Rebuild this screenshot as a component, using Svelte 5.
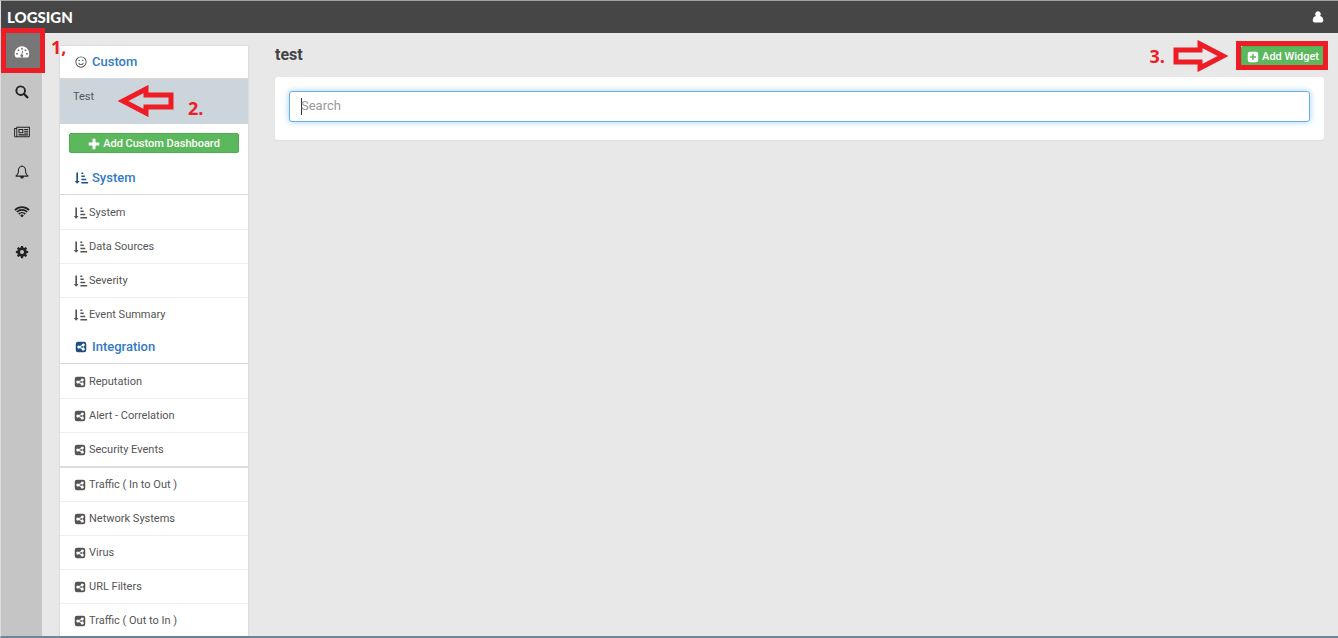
<script lang="ts">
  // 16x16 icon paths, filled with the current colour
  const icons = {
    gauge: 'M8 1.500a8.500 8.500 0 0 0-8.500 8.500c0 1.500.5 2.900 1.300 4.100.1.200.3.300.5.300h13.400c.2 0 .4-.1.5-.3A8.500 8.500 0 0 0 8 1.500zM2.300 11.100a1.100 1.100 0 1 1 0-2.200 1.100 1.100 0 0 1 0 2.200zM4 7.100a1.100 1.100 0 1 1 0-2.200 1.100 1.100 0 0 1 0 2.200zM8 3.200a1.100 1.100 0 1 1 0 2.200 1.100 1.100 0 0 1 0-2.200zM9.200 13.200a1.700 1.700 0 1 1-1.900-2.600l.9-4 1 .2-.9 4a1.700 1.700 0 0 1 .9 2.400zM12 7.100a1.100 1.100 0 1 1 0-2.200 1.100 1.100 0 0 1 0 2.200zM13.700 11.100a1.100 1.100 0 1 1 0-2.200 1.100 1.100 0 0 1 0 2.200z',
    search: 'M6.500.5a6 6 0 1 0 3.300 11l3.500 3.500a1.200 1.200 0 0 0 1.800-1.800l-3.500-3.500A6 6 0 0 0 6.500.5zm0 2.200a3.800 3.800 0 1 1 0 7.600 3.800 3.800 0 0 1 0-7.600z',
    news: 'M1.500 2H17v10.500c0 .8-.7 1.500-1.500 1.500H.5C-.4 14-1 13.300-1 12.500V3.500h2.500zM1.500 4.600H.1v7.900c0 .7 1.400.7 1.400 0zM2.600 3.100v9.400l-.1.400h13c.2 0 .4-.2.400-.4V3.100zM4 4.500h5.500v5H4zM5.200 5.700v2.600h3.100V5.700zM10.500 4.500H15v1.200h-4.500zM10.500 6.500H15v1.200h-4.500zM10.500 8.500H15v1.200h-4.500zM4 10.700H15v1.200H4z',
    bell: 'M7.200 1.100a.8.8 0 1 1 1.600 0C11.200 1.500 12.600 3.500 12.600 5.700c0 3.600 1 5.300 2.900 6.500 0 .6-.4 1.100-1 1.100h-4.400a2.100 2.100 0 0 1-4.200 0H1.500c-.6 0-1-.5-1-1.100C2.400 11 3.400 9.300 3.400 5.700c0-2.200 1.400-4.200 3.800-4.600zM8 2.100C5.900 2.100 4.600 3.700 4.600 5.700c0 3.200-.8 5-2.200 6.400h11.200c-1.400-1.400-2.200-3.200-2.200-6.400 0-2-1.300-3.600-3.400-3.600z',
    wifi: 'M8 14.200 5.900 12a3 3 0 0 1 4.200 0zM4.900 11l-1.300-1.300a6.200 6.200 0 0 1 8.800 0L11.100 11a4.400 4.400 0 0 0-6.200 0zM2.700 8.700 1.400 7.400a9.300 9.300 0 0 1 13.200 0l-1.300 1.300a7.500 7.500 0 0 0-10.600 0zM.6 6.500-.8 5.200a12.400 12.400 0 0 1 17.600 0l-1.400 1.300a10.500 10.500 0 0 0-14.800 0z',
    cog: 'M6.900 1h2.200l.4 1.900 1.100.5 1.600-1.100 1.600 1.600-1.100 1.600.5 1.100 1.800.3v2.200l-1.900.4-.4 1.100 1.100 1.600-1.600 1.600-1.600-1.100-1.100.5L9.100 15H6.900l-.4-1.800-1.100-.5-1.600 1.100-1.600-1.600 1.100-1.600-.5-1.100L1 9.100V6.900l1.800-.3.5-1.100-1.100-1.600 1.600-1.600 1.600 1.100 1.100-.5zM8 5.700a2.300 2.300 0 1 0 0 4.600 2.300 2.300 0 0 0 0-4.600z',
    user: 'M8 .5a3.700 3.700 0 0 1 2.700 6.300c2.500.2 4.300 2.600 4.300 5.900 0 1.400-1 2.500-2.300 2.500H3.300C2 15.200 1 14.100 1 12.700c0-3.300 1.800-5.700 4.300-5.900A3.700 3.700 0 0 1 8 .5z',
    smile: 'M8 .5a7.500 7.500 0 1 0 0 15 7.500 7.500 0 0 0 0-15zm0 1.300a6.200 6.200 0 1 1 0 12.400A6.200 6.200 0 0 1 8 1.800zM5.600 5a1 1 0 1 1 0 2 1 1 0 0 1 0-2zm4.800 0a1 1 0 1 1 0 2 1 1 0 0 1 0-2zM4.300 9.200l1.100-.3a2.700 2.700 0 0 0 5.200 0l1.100.3a3.800 3.800 0 0 1-7.400 0z',
    sort: 'M1.800.5h2.200v11.500h2.200L2.900 15.800-.4 12h2.200zM8.500.5h2.500v2H8.500zM8.500 4.800h4.500v2H8.500zM8.500 9.100h6.500v2H8.500zM8.500 13.400h9v2H8.500z',
    share: 'M4 1h8a3 3 0 0 1 3 3v8a3 3 0 0 1-3 3H4a3 3 0 0 1-3-3V4a3 3 0 0 1 3-3zM11 3.300a2 2 0 0 0-2 2.200L6.500 6.700a2 2 0 1 0 0 2.700L9 10.500a2 2 0 1 0 .7-1.300L7 8.100 9.600 6.800A2 2 0 1 0 11 3.300z',
    plus: 'M6 1h4v5h5v4h-5v5H6v-5H1V6h5z',
    plusSquare: 'M4 1h8a3 3 0 0 1 3 3v8a3 3 0 0 1-3 3H4a3 3 0 0 1-3-3V4a3 3 0 0 1 3-3zM7 4v3H4v2h3v3h2V9h3V7H9V4z',
  };

  type IconName = keyof typeof icons;

  const railItems: { icon: IconName; label: string }[] = [
    { icon: 'gauge', label: 'Dashboard' },
    { icon: 'search', label: 'Search' },
    { icon: 'news', label: 'Reports' },
    { icon: 'bell', label: 'Alerts' },
    { icon: 'wifi', label: 'Sources' },
    { icon: 'cog', label: 'Settings' },
  ];

  const systemItems = ['System', 'Data Sources', 'Severity', 'Event Summary'];
  const integrationItems = [
    'Reputation',
    'Alert - Correlation',
    'Security Events',
    'Traffic ( In to Out )',
    'Network Systems',
    'Virus',
    'URL Filters',
    'Traffic ( Out to In )',
  ];

  let activeRail = $state('gauge');
  let query = $state('');
</script>

{#snippet icon(name: IconName)}
  <svg class="icon" viewBox="0 0 16 16" aria-hidden="true">
    <path fill-rule="evenodd" d={icons[name]} />
  </svg>
{/snippet}

<div class="app">
  <header class="topbar">
    <a class="brand" href="#home">LOGSIGN</a>
    <button class="user" type="button" aria-label="Account">{@render icon('user')}</button>
  </header>

  <div class="body">
    <nav class="rail">
      {#each railItems as item}
        <button
          type="button"
          class="rail-item"
          class:active={activeRail === item.icon}
          aria-label={item.label}
          onclick={() => (activeRail = item.icon)}
        >
          {@render icon(item.icon)}
          {#if item.icon === 'gauge'}
            <span class="frame"></span>
            <span class="step step-one">1,</span>
          {/if}
        </button>
      {/each}
    </nav>

    <aside class="menu">
      <h2 class="heading">{@render icon('smile')}Custom</h2>
      <div class="custom">
        <a class="current" href="#test">Test</a>
        <svg class="arrow arrow-left" viewBox="0 0 56 32" aria-hidden="true">
          <path d="M5 16 28 4V10H53V22H28V28Z" />
        </svg>
        <span class="step step-two">2.</span>
      </div>
      <button class="green add-dashboard" type="button">
        {@render icon('plus')}Add Custom Dashboard
      </button>

      <h2 class="heading">{@render icon('sort')}System</h2>
      <ul>
        {#each systemItems as item}
          <li><a class="row" href="#system">{@render icon('sort')}{item}</a></li>
        {/each}
      </ul>

      <h2 class="heading after-list">{@render icon('share')}Integration</h2>
      <ul>
        {#each integrationItems as item}
          <li class:divider={item === 'Security Events'}>
            <a class="row" href="#integration">{@render icon('share')}{item}</a>
          </li>
        {/each}
      </ul>
    </aside>

    <main>
      <div class="title-bar">
        <h1>test</h1>
        <div class="add-widget">
          <button class="green" type="button">{@render icon('plusSquare')}Add Widget</button>
          <span class="frame"></span>
          <svg class="arrow arrow-right" viewBox="0 0 56 32" aria-hidden="true">
            <path d="M51 16 28 4V10H4V22H28V28Z" />
          </svg>
          <span class="step step-three">3.</span>
        </div>
      </div>
      <div class="card">
        <input type="text" placeholder="Search" aria-label="Search" bind:value={query} />
      </div>
    </main>
  </div>
</div>

<style>
  :global(body) {
    background: #e8e8e8;
  }

  .app {
    display: flex;
    flex-direction: column;
    box-sizing: border-box;
    min-height: 100vh;
    border-top: 1px solid #a0a4a2;
    border-left: 1px solid #dcdcdc;
    border-bottom: 2px solid #6b869e;
    background: #e8e8e8;
    color: #555;
    font-family: Roboto, sans-serif;
    font-size: 11px;
    line-height: 16px;
  }

  h1,
  h2,
  ul {
    margin: 0;
    padding: 0;
    list-style: none;
  }

  a {
    color: inherit;
    text-decoration: none;
  }

  button {
    padding: 0;
    border: 0;
    background: none;
    color: inherit;
    font: inherit;
    cursor: pointer;
  }

  .icon {
    flex: none;
    width: 12px;
    height: 12px;
    fill: currentColor;
    overflow: visible;
  }

  .topbar {
    display: flex;
    align-items: center;
    justify-content: space-between;
    height: 32px;
    padding: 0 14px 0 6px;
    background: #464646;
    color: #fff;
  }

  .brand {
    font-family: Lato, sans-serif;
    font-size: 15px;
    font-weight: 900;
  }

  .user {
    display: flex;
  }

  .body {
    display: flex;
    flex: 1;
  }

  .rail {
    flex: none;
    width: 41px;
    background: #c5c5c5;
  }

  .rail-item {
    position: relative;
    display: flex;
    align-items: center;
    justify-content: center;
    width: 100%;
    height: 40px;
    padding-bottom: 2px;
    color: #222;
  }

  .rail-item .icon {
    width: 14px;
    height: 14px;
  }

  .rail-item.active {
    background: #777;
    color: #fff;
  }

  .menu {
    flex: none;
    width: 188px;
    margin: 13px 27px 0 18px;
    background: #fff;
    box-shadow: 0 0 2px rgba(0, 0, 0, 0.15);
  }

  .heading {
    display: flex;
    align-items: center;
    gap: 5px;
    height: 32px;
    padding-left: 15px;
    border-bottom: 1px solid #d8d8d8;
    color: #337ac4;
    font-size: 13px;
    font-weight: 500;
  }

  .heading .icon {
    color: #1f4e85;
  }

  .heading:first-child .icon {
    color: #555;
  }

  .after-list {
    margin-top: 1px;
  }

  .custom {
    position: relative;
    height: 45px;
    background: #cbd5db;
  }

  .current {
    display: block;
    padding: 10px 13px;
  }

  .green {
    display: flex;
    align-items: center;
    justify-content: center;
    gap: 3px;
    box-sizing: border-box;
    height: 20px;
    padding-top: 1px;
    border: 1px solid #4cae4c;
    border-radius: 2px;
    background: #5cb85c;
    color: #fff;
    font-weight: 500;
  }

  .add-dashboard {
    width: calc(100% - 18px);
    margin: 9px;
  }

  .row {
    display: flex;
    align-items: center;
    gap: 3px;
    height: 33px;
    padding-left: 14px;
    border-bottom: 1px solid #eee;
  }

  li:first-child .row {
    height: 32px;
    padding-top: 2px;
  }

  li:last-child .row {
    height: 31px;
    padding-top: 1px;
    border-bottom: 0;
  }

  .divider .row {
    border-bottom: 2px solid #ddd;
  }

  main {
    flex: 1;
    min-width: 0;
    padding: 9px 14px 0 0;
  }

  .title-bar {
    display: flex;
    align-items: center;
    justify-content: space-between;
    height: 28px;
    margin-bottom: 7px;
  }

  h1 {
    padding-bottom: 2px;
    color: #444;
    font-size: 16px;
    font-weight: 700;
  }

  .add-widget {
    position: relative;
  }

  .add-widget .green {
    padding: 1px 4px 0 5px;
  }

  .card {
    padding: 14px 14px 18px;
    border-radius: 3px;
    background: #fff;
    box-shadow: 0 1px 1px rgba(0, 0, 0, 0.05);
  }

  input {
    display: block;
    box-sizing: border-box;
    width: 100%;
    height: 31px;
    padding: 0 11px 2px;
    border: 1px solid #66afe9;
    border-radius: 3px;
    outline: none;
    box-shadow: 0 0 6px rgba(102, 175, 233, 0.6);
    background: #fff;
    color: #555;
    font-family: Roboto, sans-serif;
    font-size: 13px;
  }

  /* text cursor waiting in the empty box */
  input:placeholder-shown {
    background: #fff linear-gradient(#333, #333) 11px 6px / 1px 17px no-repeat;
    caret-color: transparent;
  }

  input::placeholder {
    color: #999;
    opacity: 1;
  }

  /* tutorial marks over the page */
  .frame {
    position: absolute;
    inset: -5px -4px -4px -5px;
    border: 5px solid #ee1c25;
    pointer-events: none;
  }

  .rail-item .frame {
    inset: -5px -3px 0 0;
  }

  .arrow {
    position: absolute;
    width: 56px;
    height: 32px;
    fill: none;
    stroke: #ee1c25;
    stroke-width: 5;
    pointer-events: none;
  }

  .arrow-left {
    top: 6px;
    left: 58px;
  }

  .arrow-right {
    top: -6px;
    right: 96px;
  }

  .step {
    position: absolute;
    color: #ee1c25;
    font-family: 'Open Sans', sans-serif;
    font-size: 18px;
    font-weight: 700;
    line-height: 20px;
  }

  .step-one {
    top: 4px;
    left: 50px;
  }

  .step-two {
    top: 19px;
    left: 128px;
  }

  .step-three {
    top: 0;
    right: 159px;
  }
</style>
